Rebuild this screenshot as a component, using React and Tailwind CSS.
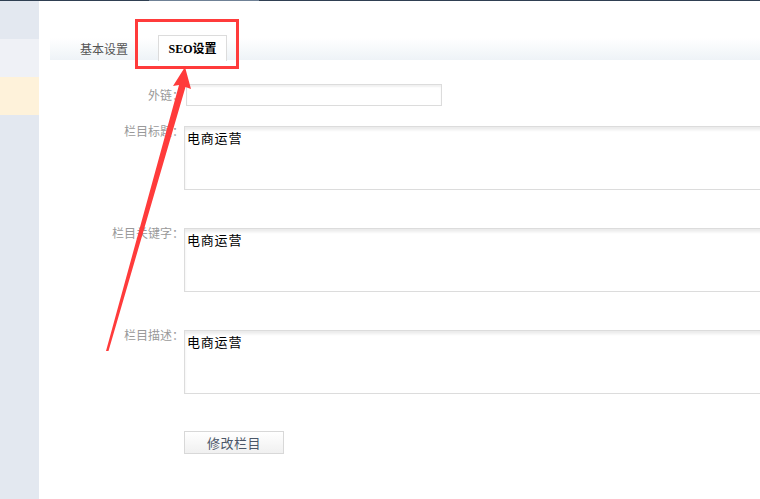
import React from "react";

const cjk = { fontFamily: '"Noto Sans CJK SC", "Liberation Sans", sans-serif' };

function Field({ label, children, labelClass = "" }) {
  return (
    <div className="flex items-start">
      <div className={"w-[134px] shrink-0 text-right text-[12px] leading-[14px] text-[#999] " + labelClass}>{label}</div>
      {children}
    </div>
  );
}

function Box({ value }) {
  return (
    <div className="h-[64px] w-[600px] shrink-0 border border-[#dcdcdc] bg-white px-[2px] pt-[2px] text-[13px] leading-[18px] tracking-[0.8px] text-black shadow-[inset_0_3px_3px_rgba(0,0,0,0.08)]">
      {value}
    </div>
  );
}

export default function App() {
  return (
    <div className="relative flex h-[499px] w-[760px] overflow-hidden bg-white" style={cjk}>
      {/* top line */}
      <div className="absolute left-0 top-0 flex h-px w-full">
        <div className="w-[149px] bg-[#2f3f52]" />
        <div className="w-[110px] bg-[#6f8196]" />
        <div className="flex-1 bg-[#2f3f52]" />
      </div>

      {/* left menu strip */}
      <div className="flex w-[39px] shrink-0 flex-col">
        <div className="h-[39px] bg-[#e3e8f0]" />
        <div className="h-[38px] bg-[#eff1f6]" />
        <div className="h-[38px] bg-[#fef2da]" />
        <div className="flex-1 bg-[#e3e8f0]" />
      </div>

      {/* content */}
      <div className="flex min-w-0 flex-1 flex-col pl-[11px] pt-[35px]">
        <div className="flex h-[25px] items-end">
          <div className="flex h-[22px] flex-1 items-end bg-gradient-to-b from-white to-[#eef3f7]">
            <div className="flex h-[22px] w-[108px] items-center justify-end pr-[30px] text-[12px] text-[#555]">基本设置</div>
            <div
              className="-mb-px flex h-[26px] w-[69px] items-center justify-center border border-b-0 border-[#dcdcdc] bg-white text-[12px] font-bold text-black"
              style={{ fontFamily: '"Liberation Serif", "Noto Sans CJK SC", serif' }}
            >
              SEO设置
            </div>
          </div>
        </div>

        <div className="flex flex-col pt-[24px]">
          <Field label="外链：" labelClass="mt-[4px]">
            <div className="ml-[2px] h-[22px] w-[256px] border border-[#dcdcdc] bg-white shadow-[inset_0_2px_2px_rgba(0,0,0,0.06)]" />
          </Field>
          <div className="h-[20px]" />
          <Field label="栏目标题：" labelClass="-mt-[2px]">
            <Box value="电商运营" />
          </Field>
          <div className="h-[38px]" />
          <Field label="栏目关键字：" labelClass="-mt-[2px]">
            <Box value="电商运营" />
          </Field>
          <div className="h-[38px]" />
          <Field label="栏目描述：" labelClass="-mt-[2px]">
            <Box value="电商运营" />
          </Field>
          <div className="h-[37px]" />
          <div className="flex">
            <div className="w-[134px] shrink-0" />
            <button className="h-[23px] w-[100px] border border-[#d8d8d8] bg-gradient-to-b from-white to-[#f0f0f0] text-[13px] tracking-[0.5px] text-[#4a5668]">
              修改栏目
            </button>
          </div>
        </div>
      </div>

      {/* annotation: red frame and arrow */}
      <div className="absolute left-[135px] top-[19px] h-[50px] w-[104px] border-[3px] border-[#ff3b3b]" />
      <svg className="absolute left-0 top-0" width="760" height="499" viewBox="0 0 760 499">
        <polygon
          points="185,67 173,86 179,85 106,351 108.5,351 185.5,87 191,89"
          fill="#ff3b3b"
        />
      </svg>
    </div>
  );
}
